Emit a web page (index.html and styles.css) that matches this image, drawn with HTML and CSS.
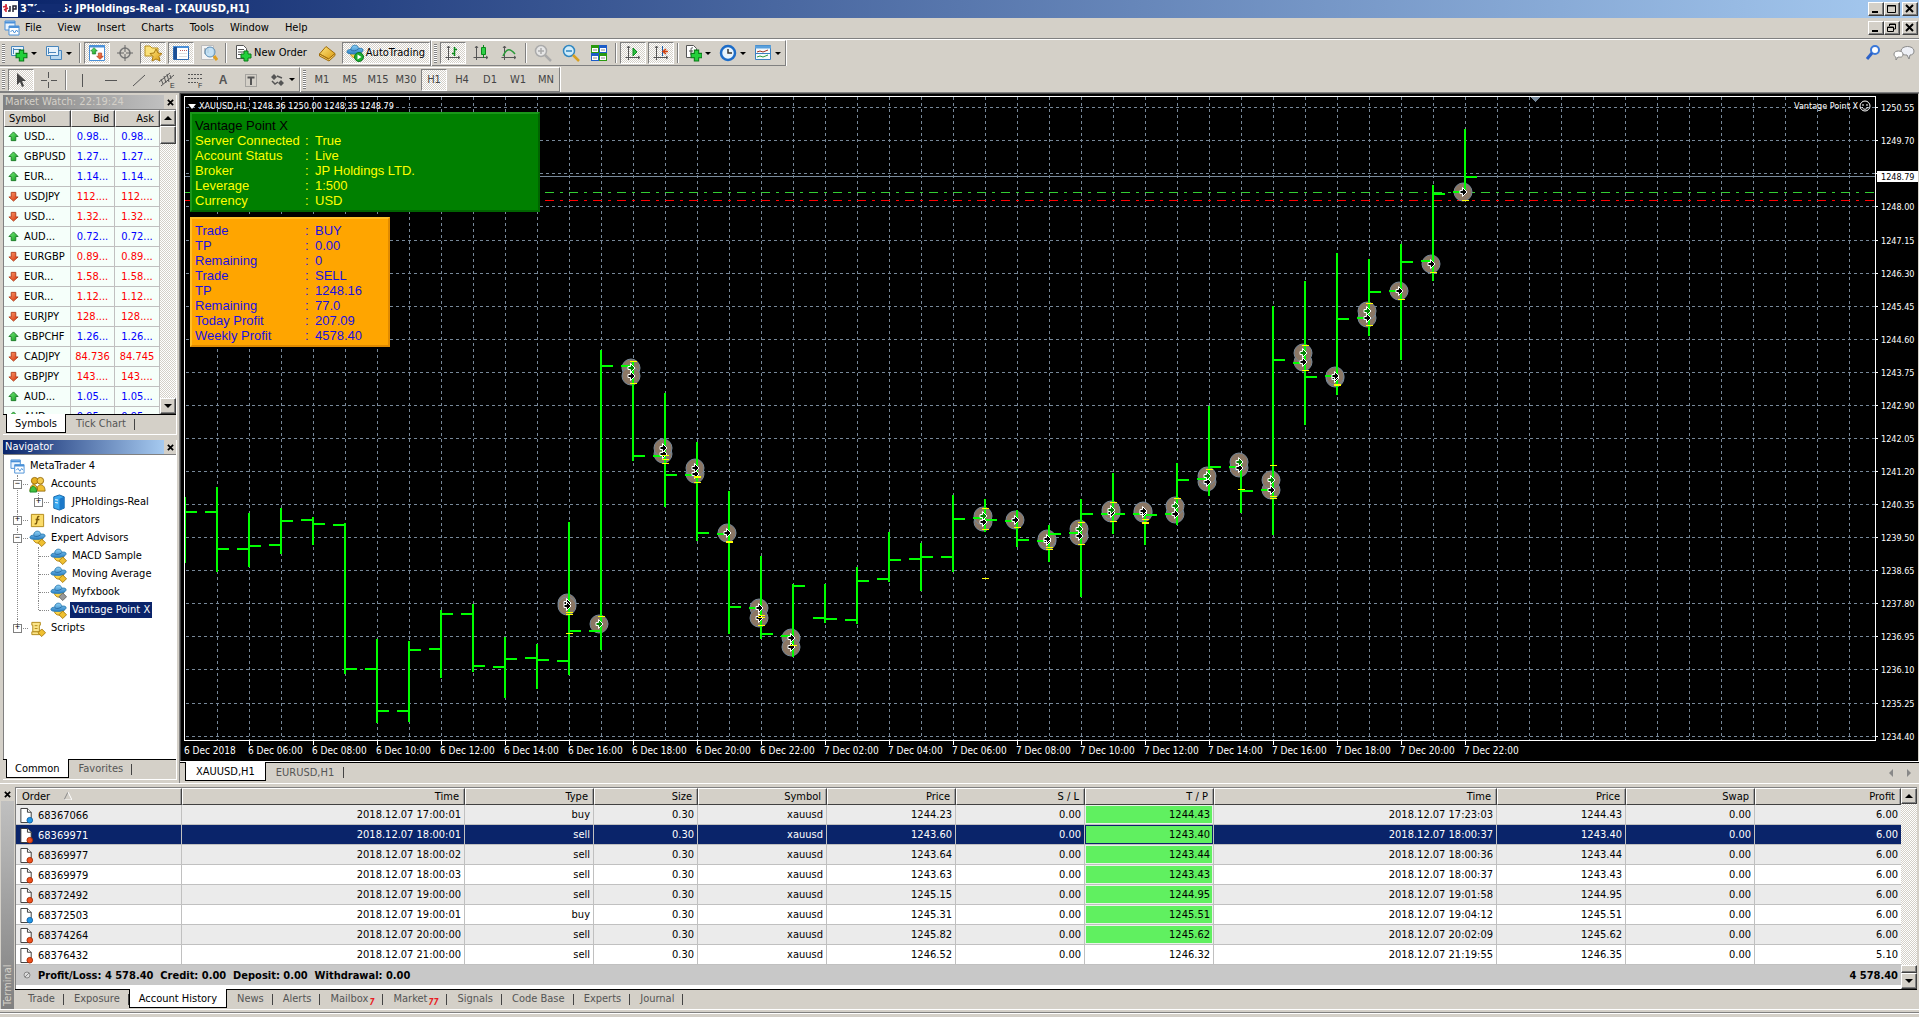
FILE: index.html
```html
<!DOCTYPE html>
<html lang="en">
<head>
<meta charset="utf-8">
<title>JPHoldings-Real - [XAUUSD,H1]</title>
<link rel="stylesheet" href="styles.css">
<script src="app.js" defer></script>
</head>
<body>
<svg class="sprite" aria-hidden="true">
  <defs>
    <linearGradient id="g-green" x1="0" y1="0" x2="1" y2="1"><stop offset="0" stop-color="#7cf07c"/><stop offset="1" stop-color="#0a9a1a"/></linearGradient>
    <linearGradient id="g-red" x1="0" y1="0" x2="1" y2="1"><stop offset="0" stop-color="#ff9a6a"/><stop offset="1" stop-color="#d43008"/></linearGradient>
    <linearGradient id="g-gold" x1="0" y1="0" x2="1" y2="1"><stop offset="0" stop-color="#ffe680"/><stop offset="1" stop-color="#d99a10"/></linearGradient>
    <linearGradient id="g-blue" x1="0" y1="0" x2="0" y2="1"><stop offset="0" stop-color="#8cd0f4"/><stop offset="1" stop-color="#2b7fc4"/></linearGradient>
  </defs>
  <symbol id="i-up" viewBox="0 0 12 12"><path d="M6 1l5 5H8.500v4.500h-5V6H1z" fill="url(#g-green)" stroke="#1c7a28"/></symbol>
  <symbol id="i-down" viewBox="0 0 12 12"><path d="M6 11L1 6.500h2.500v-5h5v5H11z" fill="url(#g-red)" stroke="#b03a18"/></symbol>
  <symbol id="i-plus" viewBox="0 0 12 12"><path d="M4 1h4v3h3v4H8v3H4V8H1V4h3z" fill="#22d03a" stroke="#0a7a18"/></symbol>
  <symbol id="i-mt" viewBox="0 0 16 16"><path d="M1 1h10v9H1z" fill="#eaf4fe" stroke="#4a90d8"/><path d="M1 2.500h10" stroke="#4a90d8" stroke-width="2"/><path d="M5 6h10v9H5z" fill="#fff" stroke="#4a90d8"/><path d="M5 7h10" stroke="#4a90d8" stroke-width="2"/><path d="M6.500 12l2-2 2 3 2-3 1.500 2" fill="none" stroke="#4a90d8"/></symbol>
  <symbol id="i-hat" viewBox="0 0 18 18"><path d="M4 8c1 6 5 7 9 5l2-5z" fill="#f8d24a" stroke="#b8860b"/><path d="M1 8c0-2 2-2.500 4-2.500C5 0 12 0 12.500 4.500 15 4 17 4.500 17 6c0 3-6 4-9 4-4 0-7-.5-7-2z" fill="url(#g-blue)" stroke="#2a7cb4"/><path d="M5 6c2 1.500 5 1 7.500-1" fill="none" stroke="#2a6ca4"/></symbol>
  <symbol id="i-ea" viewBox="0 0 18 18"><use href="#i-hat"/><path d="M13.500 9.500l4 4-4 4-4-4z" fill="#f0c030" stroke="#a87c10"/></symbol>
  <symbol id="i-ea-off" viewBox="0 0 18 18"><use href="#i-hat"/><path d="M13.500 9.500l4 4-4 4-4-4z" fill="#999" stroke="#666"/></symbol>
  <symbol id="i-doc-buy" viewBox="0 0 16 18"><path d="M2 1.500h7l4 4v11H2z" fill="#fff" stroke="#333"/><path d="M9 1.500v4h4" fill="#fff" stroke="#333"/><circle cx="11.500" cy="14" r="3" fill="#1e96e6" stroke="#1464a8"/></symbol>
  <symbol id="i-doc-sell" viewBox="0 0 16 18"><path d="M2 1.500h7l4 4v11H2z" fill="#fff" stroke="#333"/><path d="M9 1.500v4h4" fill="#fff" stroke="#333"/><circle cx="11.500" cy="14" r="3" fill="#f0501e" stroke="#a83008"/></symbol>
  <symbol id="i-axes" viewBox="0 0 18 18"><path d="M4.500 2v14M1.500 13.500h14M3 4l1.500-2L6 4M14 12l2 1.500-2 1.500" fill="none" stroke="#555"/></symbol>
  <symbol id="i-close" viewBox="0 0 8 8"><path d="M1 1l6 6M7 1L1 7" stroke="#000" stroke-width="2"/></symbol>
</svg>

<header class="titlebar">
  <svg class="logo" viewBox="0 0 16 16" aria-hidden="true"><path d="M0 0h16v16H0z" fill="#fff"/><path d="M1 6l4-1M2 9l4-2M4 3v8" stroke="#d02030" stroke-width="1.500"/><path d="M8 5v5H6M11 11V5h3v3h-3" fill="none" stroke="#223" stroke-width="1.500"/></svg>
  <h1><span class="acct">3720046<svg viewBox="0 0 42 14" aria-hidden="true"><path d="M0 4h7l3-3h32v9h-9v3H18v-4H9v4H0z" fill="#122c72"/></svg></span>: JPHoldings-Real - [XAUUSD,H1]</h1>
  <div class="winbtns">
    <button aria-label="Minimize"><svg viewBox="0 0 12 10"><path d="M2 8h6" stroke="#000" stroke-width="2"/></svg></button>
    <button aria-label="Maximize"><svg viewBox="0 0 12 10"><path d="M1.500 1.500h8v7h-8zM1 2h9" fill="none" stroke="#000"/></svg></button>
    <button class="x" aria-label="Close"><svg viewBox="0 0 12 10"><path d="M2 1l7 7M9 1L2 8" stroke="#000" stroke-width="2"/></svg></button>
  </div>
</header>

<nav class="menubar">
  <svg class="logo" aria-hidden="true"><use href="#i-mt"/></svg>
  <button>File</button><button>View</button><button>Insert</button><button>Charts</button><button>Tools</button><button>Window</button><button>Help</button>
  <div class="winbtns">
    <button aria-label="Minimize chart"><svg viewBox="0 0 12 10"><path d="M2 8h6" stroke="#000" stroke-width="2"/></svg></button>
    <button aria-label="Restore chart"><svg viewBox="0 0 12 10"><path d="M3.500 3V1h6v5H7M1.500 4h6v4.500h-6zM3 1.500h7M1 4.500h7" fill="none" stroke="#000"/></svg></button>
    <button class="x" aria-label="Close chart"><svg viewBox="0 0 12 10"><path d="M2 1l7 7M9 1L2 8" stroke="#000" stroke-width="2"/></svg></button>
  </div>
</nav>

<section class="toolbars">
  <div class="toolrow">
    <div class="tools">
      <i class="grip"></i>
      <button class="drop" aria-label="New chart"><svg viewBox="0 0 18 18"><path d="M1.500 2.500h12v9h-12z" fill="#e8f3fc" stroke="#4a86bc"/><path d="M3.500 4v6M3 5.500h8" stroke="#4a86bc"/><use href="#i-plus" x="5" y="5" width="13" height="13"/></svg></button>
      <button class="drop" aria-label="Profiles"><svg viewBox="0 0 18 18"><path d="M5.500 6.500h11v9h-11z" fill="#b8d8f0" stroke="#4a86bc"/><path d="M1.500 2.500h12v9h-12z" fill="#e8f3fc" stroke="#4a86bc"/><path d="M3.500 4v6M3 8.500h8" stroke="#4a86bc"/></svg></button>
      <i class="sep"></i>
      <button class="on" aria-label="Market Watch"><svg viewBox="0 0 18 18"><path d="M1.500 1.500h15v15h-15z" fill="#fff" stroke="#4a90d8"/><path d="M1 2.500h16" stroke="#4a90d8" stroke-width="2"/><use href="#i-up" x="2" y="3" width="8" height="8"/><use href="#i-down" x="8" y="8" width="8" height="8"/></svg></button>
      <button aria-label="Data Window"><svg viewBox="0 0 18 18"><circle cx="9" cy="9" r="5" fill="none" stroke="#777" stroke-width="1.500"/><path d="M9 1v7M9 10v7M1 9h7M10 9h7" stroke="#666"/></svg></button>
      <button class="on" aria-label="Navigator"><svg viewBox="0 0 18 18"><path d="M1 2h5l2 2h6v8H1z" fill="#fbe27a" stroke="#b89020"/><path d="M12 5l2 4 4 .5-3 3 1 4.500-4-2-4 2 1-4.500-3-3 4-.5z" fill="url(#g-gold)" stroke="#a87810"/></svg></button>
      <button class="on" aria-label="Terminal"><svg viewBox="0 0 18 18"><path d="M1.500 2.500h15v13h-15z" fill="#fff" stroke="#2c68b0"/><path d="M1 3h16" stroke="#4a90d8" stroke-width="2"/><path d="M3.500 3v12" stroke="#1c4f94" stroke-width="3"/><path d="M8 6.500h7" stroke="#c06060" stroke-dasharray="1 1"/><path d="M7 9.500h8M7 12.500h8" stroke="#ddd"/></svg></button>
      <button aria-label="Strategy Tester"><svg viewBox="0 0 18 18"><path d="M1.500 1.500h12v14h-12z" fill="#f4f4f4" stroke="#bbb"/><path d="M5 4v6M8 3v6" stroke="#888"/><circle cx="10" cy="8" r="5" fill="#b8dcf4" fill-opacity=".8" stroke="#5a8cb4"/><path d="M14 12l3 4" stroke="#e0a020" stroke-width="3"/></svg></button>
      <i class="sep"></i>
      <button class="wide"><svg viewBox="0 0 18 18"><path d="M2.500 1.500h7l3 3v10h-10z" fill="#fff" stroke="#555"/><path d="M4 5.500h6M4 8h6M4 10.500h3" stroke="#555"/><use href="#i-plus" x="6" y="6" width="12" height="12"/></svg>New Order</button>
      <button aria-label="MetaEditor"><svg viewBox="0 0 18 18"><path d="M1.500 10L8 2.500l9 7L11 15z" fill="url(#g-gold)" stroke="#a06c08"/><path d="M1.500 10l9 5 6.500-5.500v2L11 17l-9.500-5z" fill="#f0c860" stroke="#a06c08"/></svg></button>
      <button class="wide on"><svg viewBox="0 0 18 18"><use href="#i-hat"/><circle cx="13" cy="13" r="4.500" fill="#1cab30" stroke="#0c7a1c"/><path d="M11.500 10.500v5l4-2.500z" fill="#fff"/></svg>AutoTrading</button>
    </div>
    <div class="tools">
      <i class="grip"></i>
      <button class="on" aria-label="Bar Chart"><svg viewBox="0 0 18 18"><use href="#i-axes"/><path d="M10.500 3v9M8 9.500h2M11 5.500h2" stroke="#0a8a1a" stroke-width="1.500"/></svg></button>
      <button aria-label="Candlesticks"><svg viewBox="0 0 18 18"><use href="#i-axes"/><path d="M11.500 1v13" stroke="#0a8a1a"/><path d="M9.500 3.500h4v7h-4z" fill="#30d048" stroke="#0a8a1a"/></svg></button>
      <button aria-label="Line Chart"><svg viewBox="0 0 18 18"><use href="#i-axes"/><path d="M3 12c4-8 7-8 12-2" fill="none" stroke="#2a9a3a" stroke-width="1.500"/></svg></button>
      <i class="sep"></i>
      <button aria-label="Zoom In"><svg viewBox="0 0 18 18"><circle cx="7" cy="7" r="5.500" fill="#e6e6e6" stroke="#aaa" stroke-width="1.500"/><path d="M4 7h6M7 4v6" stroke="#aaa" stroke-width="1.500"/><path d="M11 11l6 6" stroke="#aaa" stroke-width="2.500"/></svg></button>
      <button aria-label="Zoom Out"><svg viewBox="0 0 18 18"><circle cx="7" cy="7" r="5.500" fill="#d0ecfa" stroke="#2f86c0" stroke-width="1.500"/><path d="M4 7h6" stroke="#2f86c0" stroke-width="1.500"/><path d="M11 11l6 6" stroke="#d8a020" stroke-width="2.500"/></svg></button>
      <button aria-label="Tile Windows"><svg viewBox="0 0 18 18"><path d="M1 1h8v8H1zM9 9h8v8H9z" fill="#2a9a10"/><path d="M9 1h8v8H9zM1 9h8v8H1z" fill="#1c5cc8"/><path d="M2 4h6v4H2zM10 4h6v4h-6zM2 12h6v4H2zM10 12h6v4h-6z" fill="#fff"/><path d="M3 6h4M11 6h4M3 14h4M11 14h4" stroke="#888"/></svg></button>
      <i class="sep"></i>
      <button class="on" aria-label="Auto Scroll"><svg viewBox="0 0 18 18"><use href="#i-axes"/><path d="M9 4v8l4-4z" fill="#2bc040" stroke="#0a8a1a"/></svg></button>
      <button class="on" aria-label="Chart Shift"><svg viewBox="0 0 18 18"><use href="#i-axes"/><path d="M10.500 2v10" stroke="#1c5ca8"/><path d="M16 7.500h-5M14 5l-3 2.500 3 2.500" fill="none" stroke="#d04010" stroke-width="1.500"/></svg></button>
      <i class="sep"></i>
      <button class="drop" aria-label="Indicators"><svg viewBox="0 0 18 18"><path d="M2.500 1.500h7l3 3v9h-10z" fill="#fff" stroke="#555"/><path d="M9 4c-2-1-2 1-2 3v4M5 7h4" fill="none" stroke="#444"/><use href="#i-plus" x="6" y="5" width="13" height="13"/></svg></button>
      <button class="drop" aria-label="Periods"><svg viewBox="0 0 18 18"><circle cx="9" cy="9" r="7" fill="#e8f4fc" stroke="#1c6cc8" stroke-width="2.500"/><path d="M9 5v4h4" fill="none" stroke="#333" stroke-width="1.500"/></svg></button>
      <button class="drop" aria-label="Templates"><svg viewBox="0 0 18 18"><path d="M1.500 1.500h15v14h-15z" fill="#f4fafe" stroke="#3a80c0"/><path d="M1 3h16" stroke="#5aa0dc" stroke-width="3"/><path d="M3 8l3-1 3 1 5-2" fill="none" stroke="#a03020"/><path d="M1 9.500h16" stroke="#3a80c0"/><path d="M3 13l3-1 3 1 5-2" fill="none" stroke="#2a9a3a"/></svg></button>
    </div>
    <div class="tray">
      <button aria-label="Search"><svg viewBox="0 0 18 18"><circle cx="10" cy="6" r="4" fill="#fff" stroke="#3a78d8" stroke-width="2"/><path d="M7 9l-5 6" stroke="#2c62c8" stroke-width="3"/></svg></button>
      <button aria-label="Chat"><svg viewBox="0 0 22 18"><path d="M8 7c0-6 13-6 13 0 0 3-2 4-4 4l-1 4-2-4c-4 0-6-1-6-4z" fill="#eef0f6" stroke="#888"/><path d="M1 10c0-4 9-4 9 0s-3 3-5 3l-2 3v-3c-1 0-2-1-2-3z" fill="#fff" stroke="#888"/></svg></button>
    </div>
  </div>
  <div class="toolrow">
    <div class="tools">
      <i class="grip"></i>
      <button class="on" aria-label="Cursor"><svg viewBox="0 0 18 18"><path d="M5 2v12l3-3 2 5 2-1-2-5h4z" fill="#444"/></svg></button>
      <button aria-label="Crosshair"><svg viewBox="0 0 18 18"><path d="M8.500 1v6M8.500 11v6M1 9.500h6M11 9.500h6" stroke="#555"/></svg></button>
      <i class="sep"></i>
      <button aria-label="Vertical line"><svg viewBox="0 0 18 18"><path d="M8.500 3v13" stroke="#555"/></svg></button>
      <button aria-label="Horizontal line"><svg viewBox="0 0 18 18"><path d="M3 9.500h12" stroke="#555"/></svg></button>
      <button aria-label="Trendline"><svg viewBox="0 0 18 18"><path d="M3 15L15 4" stroke="#555"/></svg></button>
      <button aria-label="Channel"><svg viewBox="0 0 18 18"><path d="M1 11L12 2M3 15L16 4M3 8l2 5M6 5l2 7M9 3l2 8M12 4l1 4" stroke="#555"/><text x="12" y="17" class="tiny">E</text></svg></button>
      <button aria-label="Fibonacci"><svg viewBox="0 0 18 18"><path d="M2 3.500h14M2 7.500h14M2 11.500h10" stroke="#555" stroke-dasharray="2 1"/><text x="12" y="17" class="tiny">F</text></svg></button>
      <button class="letter">A</button>
      <button aria-label="Text label"><svg viewBox="0 0 18 18"><path d="M3.500 3.500h11v12h-11z" fill="none" stroke="#777" stroke-dasharray="1 1"/><path d="M5.500 6.500h7M9 6v8" stroke="#555" stroke-width="2"/></svg></button>
      <button class="drop" aria-label="Arrows"><svg viewBox="0 0 18 18"><path d="M3 6l3-3 3 3-3 3zM10 12l3-3 3 3-3 3z" fill="#555"/><path d="M4 10l3 3 3-2M9 5l5 2" fill="none" stroke="#555" stroke-width="1.500"/></svg></button>
    </div>
    <div class="tools periods">
      <i class="grip"></i>
      <button>M1</button><button>M5</button><button>M15</button><button>M30</button><button class="on">H1</button><button>H4</button><button>D1</button><button>W1</button><button>MN</button>
    </div>
  </div>
</section>

<main class="workspace">
  <aside class="sidebar">
    <section class="panel watch">
      <div class="panelhead idle"><h2>Market Watch: 22:19:24</h2><button aria-label="Close Market Watch"><svg><use href="#i-close"/></svg></button></div>
      <div class="scrollbox">
        <table class="quotes">
          <thead><tr><th>Symbol</th><th>Bid</th><th>Ask</th></tr></thead>
          <tbody id="quotes"></tbody>
        </table>
        <div class="scroll"><button class="sb up" aria-label="Scroll up"></button><i class="thumb"></i><button class="sb down" aria-label="Scroll down"></button></div>
      </div>
      <div class="tabs"><button class="active">Symbols</button><button>Tick Chart</button></div>
    </section>
    <section class="panel nav">
      <div class="panelhead"><h2>Navigator</h2><button aria-label="Close Navigator"><svg><use href="#i-close"/></svg></button></div>
      <div class="treebox">
        <p class="root"><svg viewBox="0 0 16 16"><use href="#i-mt"/></svg>MetaTrader 4</p>
        <ul class="tree">
          <li><div><b class="box">−</b><svg viewBox="0 0 18 18"><circle cx="6" cy="5" r="3.500" fill="#e8b020" stroke="#9a7010"/><circle cx="12" cy="5" r="3.500" fill="#f4cc50" stroke="#9a7010"/><path d="M1 16c0-9 8-9 8-1zM8 16c0-9 9-9 9 0z" fill="#f0c030" stroke="#9a7010"/><path d="M1 17c0-8 7-8 7 0z" fill="#40c040" stroke="#1c8a28"/></svg><span>Accounts</span></div>
            <ul><li><div><b class="box">+</b><svg viewBox="0 0 18 18"><path d="M4 3l6-2 5 2v12l-5 2-6-2z" fill="#38a8f0" stroke="#1464a8"/><path d="M10 5v12l5-2V3z" fill="#1c78c8"/><path d="M5.500 6l3 .5M5.500 9l3 .5" stroke="#fff"/></svg><span>JPHoldings-Real</span></div></li></ul></li>
          <li><div><b class="box">+</b><svg viewBox="0 0 18 18"><path d="M2.500 2.500h13v13h-13z" fill="#fbdc6a" stroke="#b08818"/><path d="M11 5c-2-1-2 1-2.500 4S8 13 6 12.500M7 8h4" fill="none" stroke="#7a5808" stroke-width="1.500"/></svg><span>Indicators</span></div></li>
          <li><div><b class="box">−</b><svg viewBox="0 0 18 18"><use href="#i-ea"/></svg><span>Expert Advisors</span></div>
            <ul>
              <li><div><svg viewBox="0 0 18 18"><use href="#i-ea"/></svg><span>MACD Sample</span></div></li>
              <li><div><svg viewBox="0 0 18 18"><use href="#i-ea"/></svg><span>Moving Average</span></div></li>
              <li><div><svg viewBox="0 0 18 18"><use href="#i-ea-off"/></svg><span>Myfxbook</span></div></li>
              <li><div class="picked"><svg viewBox="0 0 18 18"><use href="#i-ea"/></svg><span>Vantage Point X</span></div></li>
            </ul></li>
          <li><div><b class="box">+</b><svg viewBox="0 0 18 18"><path d="M3 2.500h9v3h-1v7H4v-7H3z" fill="#fbe488" stroke="#b08818"/><path d="M3 12.500h9v3H3zM6 6h3M6 9h3" fill="#fbe488" stroke="#b08818"/><path d="M13.500 9.500l4 4-4 4-4-4z" fill="#f0c030" stroke="#a87c10"/></svg><span>Scripts</span></div></li>
        </ul>
      </div>
      <div class="tabs"><button class="active">Common</button><button>Favorites</button></div>
    </section>
  </aside>

  <section class="charts">
    <div class="chart">
      <div class="plotwrap">
        <svg id="plot" role="img" aria-label="XAUUSD hourly bar chart"></svg>
        <p class="ohlc"><svg viewBox="0 0 8 5" aria-hidden="true"><path d="M0 0h8L4 5z" fill="#fff"/></svg>XAUUSD,H1&nbsp; 1248.36 1250.00 1248.35 1248.79</p>
        <p class="expert">Vantage Point X<svg viewBox="0 0 12 12" aria-hidden="true"><circle cx="6" cy="6" r="5" fill="none" stroke="#fff"/><path d="M4 4v2M8 4v2M3 7c1 3 5 3 6 0" fill="none" stroke="#fff"/></svg></p>
        <dl class="info green">
          <dt class="title">Vantage Point X</dt><dd></dd>
          <dt>Server Connected</dt><dd>True</dd>
          <dt>Account Status</dt><dd>Live</dd>
          <dt>Broker</dt><dd>JP Holdings LTD.</dd>
          <dt>Leverage</dt><dd>1:500</dd>
          <dt>Currency</dt><dd>USD</dd>
        </dl>
        <dl class="info orange">
          <dt>Trade</dt><dd>BUY</dd>
          <dt>TP</dt><dd>0.00</dd>
          <dt>Remaining</dt><dd>0</dd>
          <dt>Trade</dt><dd>SELL</dd>
          <dt>TP</dt><dd>1248.16</dd>
          <dt>Remaining</dt><dd>77.0</dd>
          <dt>Today Profit</dt><dd>207.09</dd>
          <dt>Weekly Profit</dt><dd>4578.40</dd>
        </dl>
      </div>
      <svg id="prices" class="prices"></svg>
      <svg id="times" class="times"></svg>
    </div>
    <div class="charttabs">
      <div class="tabs"><button class="active">XAUUSD,H1</button><button>EURUSD,H1</button></div>
      <div class="steps"><button aria-label="Previous tabs"><svg viewBox="0 0 4 8"><path d="M4 0v8L0 4z" fill="#888"/></svg></button><button aria-label="Next tabs"><svg viewBox="0 0 4 8"><path d="M0 0v8l4-4z" fill="#888"/></svg></button></div>
    </div>
  </section>
</main>

<section class="terminal">
  <div class="strip"><button aria-label="Close Terminal"><svg><use href="#i-close"/></svg></button><h2>Terminal</h2></div>
  <div class="termbody">
    <div class="scrollbox">
      <table class="orders">
        <colgroup><col class="c-order"><col class="c-time"><col class="c-num"><col class="c-size"><col class="c-num"><col class="c-num"><col class="c-num"><col class="c-num"><col class="c-time"><col class="c-num"><col class="c-num"><col></colgroup>
        <thead><tr><th>Order<svg viewBox="0 0 8 8" aria-hidden="true"><path d="M4 0L0 8" stroke="#888"/><path d="M4 0l4 8H0" fill="none" stroke="#fff"/></svg></th><th>Time</th><th>Type</th><th>Size</th><th>Symbol</th><th>Price</th><th>S / L</th><th>T / P</th><th>Time</th><th>Price</th><th>Swap</th><th>Profit</th></tr></thead>
        <tbody id="orders"></tbody>
        <tfoot><tr><td colspan="11"><svg viewBox="0 0 8 8" aria-hidden="true"><circle cx="4" cy="4" r="3" fill="#ddd" stroke="#888"/><path d="M2 6l4-4" stroke="#888"/></svg>Profit/Loss: 4 578.40&nbsp; Credit: 0.00&nbsp; Deposit: 0.00&nbsp; Withdrawal: 0.00</td><td>4 578.40</td></tr></tfoot>
      </table>
      <div class="scroll end"><button class="sb up" aria-label="Scroll up"></button><i class="thumb"></i><button class="sb down" aria-label="Scroll down"></button></div>
    </div>
    <div class="tabs">
      <button>Trade</button><button>Exposure</button><button class="active">Account History</button><button>News</button><button>Alerts</button><button>Mailbox<em>7</em></button><button>Market<em>77</em></button><button>Signals</button><button>Code Base</button><button>Experts</button><button>Journal</button>
    </div>
  </div>
</section>
<footer class="status"></footer>
</body>
</html>
```
FILE: app.js
```js
const NS = 'http://www.w3.org/2000/svg';
function add(parent, name, attrs, text) {
  const el = document.createElementNS(NS, name);
  for (const key in attrs) el.setAttribute(key, attrs[key]);
  if (text) el.textContent = text;
  parent.appendChild(el);
  return el;
}

/* Market Watch: symbol, direction, bid, ask */
const quotes = [
  ['USD...', 'up', '0.98...', '0.98...'], ['GBPUSD', 'up', '1.27...', '1.27...'],
  ['EUR...', 'up', '1.14...', '1.14...'], ['USDJPY', 'down', '112....', '112....'],
  ['USD...', 'down', '1.32...', '1.32...'], ['AUD...', 'up', '0.72...', '0.72...'],
  ['EURGBP', 'down', '0.89...', '0.89...'], ['EUR...', 'down', '1.58...', '1.58...'],
  ['EUR...', 'down', '1.12...', '1.12...'], ['EURJPY', 'down', '128....', '128....'],
  ['GBPCHF', 'up', '1.26...', '1.26...'], ['CADJPY', 'down', '84.736', '84.745'],
  ['GBPJPY', 'down', '143....', '143....'], ['AUD...', 'up', '1.05...', '1.05...'],
  ['AUD...', 'up', '0.95...', '0.95...'],
];
document.getElementById('quotes').innerHTML = quotes.map(([sym, dir, bid, ask]) =>
  `<tr class="${dir}"><td><svg><use href="#i-${dir}"/></svg>${sym}</td><td>${bid}</td><td>${ask}</td></tr>`).join('');

/* Account history: order, opened, type, price, take profit, closed, close price, profit */
const orders = [
  ['68367066', '17:00:01', 'buy', '1244.23', '1244.43', '17:23:03', '1244.43', '6.00'],
  ['68369971', '18:00:01', 'sell', '1243.60', '1243.40', '18:00:37', '1243.40', '6.00'],
  ['68369977', '18:00:02', 'sell', '1243.64', '1243.44', '18:00:36', '1243.44', '6.00'],
  ['68369979', '18:00:03', 'sell', '1243.63', '1243.43', '18:00:37', '1243.43', '6.00'],
  ['68372492', '19:00:00', 'sell', '1245.15', '1244.95', '19:01:58', '1244.95', '6.00'],
  ['68372503', '19:00:01', 'buy', '1245.31', '1245.51', '19:04:12', '1245.51', '6.00'],
  ['68374264', '20:00:00', 'sell', '1245.82', '1245.62', '20:02:09', '1245.62', '6.00'],
  ['68376432', '21:00:00', 'sell', '1246.52', '1246.32', '21:19:55', '1246.35', '5.10'],
];
document.getElementById('orders').innerHTML = orders.map((o, i) => {
  const hit = o[4] === o[6] ? ' class="hit"' : '';
  return `<tr${i === 1 ? ' class="selected"' : ''}><td><svg><use href="#i-doc-${o[2]}"/></svg>${o[0]}</td>` +
    `<td>2018.12.07 ${o[1]}</td><td>${o[2]}</td><td>0.30</td><td>xauusd</td><td>${o[3]}</td><td>0.00</td>` +
    `<td${hit}>${o[4]}</td><td>2018.12.07 ${o[5]}</td><td>${o[6]}</td><td>0.00</td><td>${o[7]}</td></tr>`;
}).join('');

/* Chart. Levels are kept on the screen scale, TOP is the first level of the plot. */
const TOP = 97;
const STEP = 32;
const plot = document.getElementById('plot');
const prices = document.getElementById('prices');
const times = document.getElementById('times');
const GRID = '#778899';

const levels = [107, 140, 173, 206, 240, 273, 306, 339, 372, 405, 438, 471, 504, 537, 570, 603, 636, 669, 703, 736];
levels.forEach((y, i) => {
  const py = y - TOP + 0.5;
  add(plot, 'line', { x1: 1, y1: py, x2: '100%', y2: py, stroke: GRID, 'stroke-dasharray': '3 3' });
  add(prices, 'line', { x1: 0, y1: py + 1, x2: 2, y2: py + 1, stroke: '#fff' });
  /* the last-price flag takes the place of the third label */
  if (i !== 2) add(prices, 'text', { x: 5, y: y - TOP + 5 }, (1250.55 - 0.85 * i).toFixed(2));
});
for (let x = STEP; x < 2400; x += STEP) {
  add(plot, 'line', { x1: x + 0.5, y1: 0, x2: x + 0.5, y2: '100%', stroke: GRID, 'stroke-dasharray': '3 3' });
}
add(plot, 'line', { x1: 0, y1: 79.5, x2: '100%', y2: 79.5, stroke: GRID });
add(plot, 'line', { x1: 0, y1: 95.5, x2: '100%', y2: 95.5, stroke: '#32cd32', 'stroke-dasharray': '9 6 3 6' });
add(plot, 'line', { x1: 0, y1: 103.5, x2: '100%', y2: 103.5, stroke: '#ff0000', 'stroke-dasharray': '9 6 3 6' });
add(plot, 'path', { d: 'M1346 0h9l-4.500 5z', fill: GRID });
add(prices, 'rect', { x: 1, y: 75, width: 41, height: 11, fill: '#fff' });
add(prices, 'text', { x: 5, y: 84, class: 'last' }, '1248.79');

/* high, low, open, close, trade markers (g: green arrow), take-profit dashes */
const bars = [
  [497, 563, 0, 512], [487, 572, 512, 549], [513, 567, 549, 546], [508, 554, 545, 521], [517, 545, 520, 524],
  [523, 674, 525, 669], [639, 723, 669, 711], [641, 722, 711, 650], [610, 678, 649, 614], [604, 672, 614, 666],
  [637, 698, 667, 659], [644, 689, 658, 660],
  [522, 675, 661, 631, '603 606', '612 614 633'], [350, 650, 631, 366, '624g', '616'],
  [361, 461, 366, 456, '368g 376', '361 383'], [393, 507, 456, 475, '454 448', '455 459 463'],
  [442, 541, 475, 533, '474 468', '476 477 482'], [491, 634, 534, 607, '533', '541 542'],
  [556, 639, 608, 634, '608 618', '615 617 625'], [584, 657, 636, 586, '638 647', '645'],
  [584, 623, 618, 619], [567, 624, 620, 581], [532, 582, 579, 560], [543, 591, 559, 557], [495, 572, 557, 519],
  [499, 532, 518, 520, '522 516g', '508 529 578'], [510, 547, 521, 540, '520', '527'],
  [525, 562, 541, 534, '541 539', '547 549'], [499, 597, 533, 514, '536 529g', '522 544'],
  [473, 534, 514, 514, '513 510g', '502 521'], [510, 545, 514, 515, '513 511', '519 522 523'],
  [463, 525, 514, 480, '514 506g', '498'], [406, 496, 479, 467, '482 476g', '469'],
  [462, 513, 467, 491, '468 462g', '489'], [306, 535, 490, 360, '490 480g', '465 496 498'],
  [281, 425, 363, 377, '362 353g', '345 370'], [253, 395, 376, 319, '378 376', '384 385'],
  [259, 336, 318, 292, '318 311g', '303 325'], [244, 360, 291, 262, '291', '299'],
  [185, 281, 261, 194, '264', '272'], [129, 192, 192, 177, '192', '200'],
];
const layers = ['circles', 'sticks', 'arrows'].map(id => add(plot, 'g', { class: id }));
bars.forEach(([high, low, open, close, marks = '', dashes = ''], i) => {
  const x = i * STEP;
  let d = `M${x} ${high - TOP}V${low - TOP}M${x} ${close - TOP}h12`;
  if (open) d += `M${x - 12} ${open - TOP}h12`;
  add(layers[1], 'path', { d, stroke: '#00ff00', 'stroke-width': 2, fill: 'none' });
  marks.split(' ').filter(Boolean).forEach(m => {
    const y = parseInt(m, 10) - TOP;
    add(layers[0], 'circle', { cx: x - 2, cy: y, r: 9, fill: '#8b7765', stroke: GRID });
    add(layers[2], 'path', {
      d: `M${x - 5} ${y - 1.5}h2.500v-3l4.500 4.500-4.500 4.500v-3h-2.500z`,
      fill: m.endsWith('g') ? '#008000' : '#000', stroke: '#fff',
    });
  });
  dashes.split(' ').filter(Boolean).forEach(v =>
    add(layers[2], 'line', { x1: x - 3, x2: x + 4, y1: v - TOP + 0.5, y2: v - TOP + 0.5, stroke: '#ffff00' }));
});

/* Time axis */
add(times, 'text', { x: 0, y: 13 }, '6 Dec 2018');
const hours = ['06', '08', '10', '12', '14', '16', '18', '20', '22'];
const stamps = hours.map(h => `6 Dec ${h}:00`).concat(['02', '04', ...hours].map(h => `7 Dec ${h}:00`));
stamps.forEach((label, i) => {
  const x = 65 + i * 64;
  add(times, 'line', { x1: x + 0.5, y1: 0, x2: x + 0.5, y2: 4, stroke: '#fff' });
  add(times, 'text', { x: x - 1, y: 13 }, label);
});
```
FILE: styles.css
```css
* { box-sizing: border-box; }
:root {
  --face: #d4d0c8;
  --shade: #808080;
  --navy: #0a246a;
}
body {
  margin: 0;
  height: 100vh;
  display: flex;
  flex-direction: column;
  overflow: hidden;
  background: var(--face);
  color: #000;
  font: 11px/14px "DejaVu Sans Condensed", Tahoma, "Noto Sans", sans-serif;
}
h1, h2, p, dl, dd, ul { margin: 0; padding: 0; font-size: inherit; }
button { margin: 0; padding: 0; border: 0; background: none; font: inherit; color: inherit; }
svg { display: block; flex: none; }
.sprite { position: absolute; width: 0; height: 0; }

/* Title and menu */
.titlebar {
  height: 18px;
  display: flex;
  align-items: center;
  background: linear-gradient(90deg, var(--navy), #a6caf0);
  color: #fff;
}
.titlebar .logo { width: 16px; height: 16px; margin: 0 2px; }
.titlebar h1 { flex: 1; font-weight: bold; white-space: nowrap; }
.acct { position: relative; }
.acct svg { position: absolute; left: 7px; top: 1px; width: 40px; height: 12px; }
.winbtns { display: flex; align-items: center; padding-right: 1px; margin-left: auto; }
.winbtns button {
  width: 16px;
  height: 14px;
  background: var(--face);
  border: 1px solid;
  border-color: #fff #404040 #404040 #fff;
  box-shadow: inset -1px -1px var(--shade);
}
.winbtns .x { margin-left: 2px; }
.winbtns svg { width: 12px; height: 10px; margin: auto; }
.menubar {
  height: 22px;
  display: flex;
  align-items: center;
  border-bottom: 1px solid #fff;
  box-shadow: inset 0 -1px var(--shade);
  padding-bottom: 1px;
}
.menubar .logo { width: 16px; height: 16px; margin: 0 2px 0 4px; }
.menubar > button { padding: 0 8px; }
.menubar > .logo + button { padding-left: 3px; }

/* Toolbars */
.toolbars { border-bottom: 1px solid var(--shade); }
.toolrow { height: 27px; display: flex; border-bottom: 1px solid var(--face); }
.toolrow + .toolrow { height: 25px; border-bottom: 0; }
.tools {
  display: flex;
  align-items: center;
  gap: 2px;
  padding-left: 2px;
  border: 1px solid;
  border-color: #fff var(--shade) var(--shade);
  border-left: 0;
  box-shadow: 1px 0 #fff;
  margin-right: 1px;
}
.grip {
  width: 3px;
  height: 19px;
  margin-right: 1px;
  background: repeating-linear-gradient(#808080 0 1px, #fff 1px 2px);
}
.sep { width: 2px; height: 20px; margin: 0 1px; border-left: 1px solid var(--shade); border-right: 1px solid #fff; }
.tools button {
  width: 26px;
  height: 22px;
  display: flex;
  align-items: center;
  justify-content: center;
  border: 1px solid transparent;
}
.tools button svg { width: 18px; height: 18px; }
.tools .on, .scroll {
  background: repeating-conic-gradient(#fff 0 25%, var(--face) 0 50%) 0 0 / 2px 2px;
}
.tools .on { border-color: var(--shade) #fff #fff var(--shade); }
.tools .drop { width: 33px; justify-content: flex-start; gap: 3px; padding-left: 1px; }
.drop::after { content: ""; border: 3px solid transparent; border-top-color: #000; border-bottom: 0; }
.tools .wide { width: auto; gap: 2px; padding: 0 4px 0 3px; }
.tools .letter { font: bold 12px "Liberation Sans", sans-serif; color: #555; }
.periods { color: #444; }
.tiny { font: 7px "Liberation Sans", sans-serif; fill: #333; }
.tray { margin-left: auto; display: flex; align-items: center; gap: 10px; padding-right: 4px; }
.tray svg { width: 18px; height: 18px; }
.tray button + button svg { width: 22px; }

/* Workspace */
.workspace { flex: 1; min-height: 0; display: flex; }
.sidebar { width: 180px; flex: none; display: flex; flex-direction: column; gap: 5px; padding: 2px 2px 3px 3px; border-right: 1px solid var(--shade); }
.panel { display: flex; flex-direction: column; border-right: 1px solid #fff; border-bottom: 1px solid #fff; }
.watch { height: 340px; }
.nav { flex: 1; min-height: 0; }
.panelhead { height: 14px; display: flex; align-items: center; }
.panelhead h2 {
  flex: 1;
  height: 14px;
  line-height: 14px;
  padding-left: 2px;
  font-weight: normal;
  color: #fff;
  background: linear-gradient(90deg, var(--navy), #a6caf0);
}
.panelhead.idle h2 { color: var(--face); background: linear-gradient(90deg, #808080, #c0c0c0); }
.panelhead button { width: 12px; display: flex; justify-content: center; }
.panelhead svg, .strip svg { width: 7px; height: 7px; }
.scrollbox { flex: 1; min-height: 0; display: flex; overflow: hidden; background: #fff; border: 1px solid var(--shade); border-width: 1px 0 0 1px; }
table { border-collapse: separate; border-spacing: 0; table-layout: fixed; }
th {
  font-weight: normal;
  background: var(--face);
  border: 1px solid;
  border-color: #fff #404040 #404040 #fff;
  box-shadow: inset -1px 0 #a0a0a0;
}
td { white-space: nowrap; overflow: hidden; border: 0 solid #c0c0c0; border-width: 0 1px 1px 0; }
.quotes { width: 156px; align-self: flex-start; }
.quotes th { height: 17px; padding: 0 5px 0 0; text-align: right; }
.quotes th:first-child { width: 67px; text-align: left; padding-left: 4px; }
.quotes th:nth-child(2) { width: 44px; }
.quotes td { height: 20px; padding: 1px 0 0; background: #f5fffa; text-align: center; }
.quotes td:first-child { text-align: left; color: #000; padding-left: 4px; }
.quotes td svg { display: inline-block; width: 11px; height: 11px; margin-right: 5px; vertical-align: -2px; }
.quotes .up { color: #0000ff; }
.quotes .down { color: #ff0000; }
.scroll { width: 16px; flex: none; display: flex; flex-direction: column; }
.sb, .thumb {
  width: 16px;
  height: 16px;
  flex: none;
  background: var(--face);
  border: 1px solid;
  border-color: #fff #404040 #404040 #fff;
  box-shadow: inset -1px -1px var(--shade);
}
.sb { display: flex; align-items: center; justify-content: center; }
.sb::before { content: ""; border: 4px solid transparent; }
.sb.up::before { border-bottom-color: #000; border-top: 0; }
.sb.down::before { border-top-color: #000; border-bottom: 0; }
.thumb { height: 18px; }
.scroll .down { margin-top: auto; }

/* Tabs */
.tabs { display: flex; height: 20px; flex: none; border-top: 1px solid #000; padding-left: 3px; color: #555; }
.tabs button { position: relative; height: 18px; padding: 0 9px 0 10px; }
.tabs button::after {
  content: "";
  position: absolute;
  right: 0;
  top: 4px;
  height: 11px;
  border-right: 1px solid #444;
}
.tabs .active { background: #fff; color: #000; border: 1px solid #000; border-top: 0; margin-top: -1px; height: 19px; padding: 1px 8px 0; }
.tabs .active::after { display: none; }
.tabs em { color: #e81c24; font: italic bold 8px "DejaVu Sans Condensed", sans-serif; margin-left: 1px; position: relative; top: 3px; }

/* Navigator tree */
.treebox { flex: 1; min-height: 0; background: #fff; border: 1px solid var(--shade); border-width: 1px 0 0 1px; padding-top: 2px; white-space: nowrap; overflow: hidden; }
.root { height: 18px; display: flex; align-items: center; gap: 5px; padding-left: 6px; }
.root svg { width: 15px; height: 15px; }
.tree, .tree ul { list-style: none; }
.tree { padding-left: 9px; }
.tree li { position: relative; }
.tree div { height: 18px; display: flex; align-items: center; padding-left: 16px; position: relative; }
.tree li ul { padding-left: 21px; }
.tree svg { width: 17px; height: 17px; }
.tree span { padding: 1px 2px; margin-left: 3px; }
.tree .picked span { background: var(--navy); color: #fff; }
.tree li::before { content: ""; position: absolute; left: 4px; top: 0; bottom: 0; border-left: 1px dotted #888; }
.tree li:last-child::before { bottom: auto; height: 9px; }
.tree li > div::before { content: ""; position: absolute; left: 5px; top: 9px; width: 10px; border-top: 1px dotted #888; }
.box {
  position: absolute;
  left: 0;
  top: 5px;
  width: 9px;
  height: 9px;
  border: 1px solid var(--shade);
  background: #fff;
  font: 9px/7px "Liberation Mono", monospace;
  text-align: center;
}

/* Chart */
.charts { flex: 1; min-width: 0; display: flex; flex-direction: column; }
.chart {
  flex: 1;
  min-height: 0;
  display: grid;
  grid-template: minmax(0, 1fr) 20px / minmax(0, 1fr) 42px;
  background: #000;
  padding: 2px 0 0 3px;
  border: solid #404040;
  border-width: 1px 0 0 1px;
  border-right: 1px solid var(--face);
}
.plotwrap { position: relative; border: 1px solid #fff; overflow: hidden; }
.plotwrap #plot { width: 100%; height: 100%; shape-rendering: crispEdges; }
.circles, .arrows path { shape-rendering: auto; }
.prices { width: 100%; height: 100%; }
.times { width: 100%; height: 20px; }
.chart text { font: 10px "DejaVu Sans Condensed", sans-serif; fill: #fff; }
.chart .prices text { font-size: 9px; }
.chart .last { fill: #000; }
.ohlc, .expert { position: absolute; display: flex; align-items: center; color: #fff; font-size: 9px; line-height: 12px; }
.ohlc { left: 3px; top: 3px; gap: 3px; }
.ohlc svg { width: 8px; height: 5px; }
.expert { right: 4px; top: 3px; gap: 1px; }
.expert svg { width: 12px; height: 12px; }
.info {
  position: absolute;
  left: 5px;
  display: grid;
  grid-template-columns: 110px 1fr;
  grid-auto-rows: 15px;
  align-content: start;
  padding: 4px 3px;
  border: 2px solid;
  font: 13px/15px "Liberation Sans", sans-serif;
}
.info dd::before { content: ":"; display: inline-block; width: 10px; }
.info .title + dd::before { content: none; }
.green { top: 15px; width: 350px; height: 100px; background: #008000; border-color: #1a961a #006400 #006400 #1a961a; color: #ff0; }
.green .title { color: #000; }
.orange { top: 120px; width: 200px; height: 130px; background: #ffa500; border-color: #ffbe28 #e08a00 #e08a00 #ffbe28; color: #1a10e0; }
.charttabs { display: flex; height: 22px; border-top: 1px solid #fff; }
.charttabs .tabs { flex: 1; padding-left: 5px; }
.charttabs .tabs button { padding: 1px 10px 0; }
.steps { display: flex; gap: 14px; align-items: center; padding-right: 8px; border-top: 1px solid #000; }
.steps svg { width: 4px; height: 8px; }

/* Terminal */
.terminal { display: flex; border-top: 1px solid #fff; border-bottom: 1px solid #fff; padding: 3px 2px 0 1px; }
.strip { width: 14px; display: flex; flex-direction: column; padding-right: 1px; }
.strip button { height: 14px; display: flex; align-items: center; justify-content: center; }
.strip h2 {
  flex: 1;
  writing-mode: vertical-rl;
  transform: rotate(180deg);
  font-weight: normal;
  line-height: 13px;
  padding-top: 3px;
  color: var(--face);
  background: linear-gradient(0deg, #c0c0c0, #808080);
}
.termbody { flex: 1; min-width: 0; }
.termbody .tabs .active { padding: 1px 9px 0; }
.orders { flex: 1; width: 100%; }
.orders th { height: 17px; padding: 0 5px 0 0; text-align: right; }
.orders th:first-child { text-align: left; padding-left: 5px; }
.orders th svg { display: inline-block; width: 8px; height: 8px; margin-left: 14px; }
.c-order { width: 166px; }
.c-time { width: 283px; }
.c-num { width: 129px; }
.c-size { width: 104px; }
.orders td { height: 20px; padding: 1px 3px 0 0; text-align: right; }
.orders td:first-child { text-align: left; padding-left: 3px; }
.orders tbody td svg { display: inline-block; width: 15px; height: 17px; margin-right: 4px; vertical-align: middle; }
.orders tbody tr:nth-child(odd) { background: #ebebeb; }
.orders tbody .selected { background: var(--navy); color: #fff; }
.orders .hit { background: #60f060; color: #000; box-shadow: inset 0 0 0 1px #e8f4e8; }
.orders .selected .hit { box-shadow: inset 0 0 0 1px var(--navy); }
.orders td:last-child { border-right: 0; }
.orders tfoot td { font-weight: bold; background: #c8c8c8; border: 0; }
.orders tfoot td svg { display: inline-block; width: 8px; height: 8px; margin: 0 7px 0 4px; }
.termbody .scrollbox { padding-bottom: 4px; }
.scroll.end .thumb { margin-top: auto; height: 8px; }
.scroll.end .down { margin: 0 0 -4px; }
.status { height: 5px; margin-top: 2px; border-top: 1px solid var(--shade); box-shadow: inset 0 1px #fff; }
```
